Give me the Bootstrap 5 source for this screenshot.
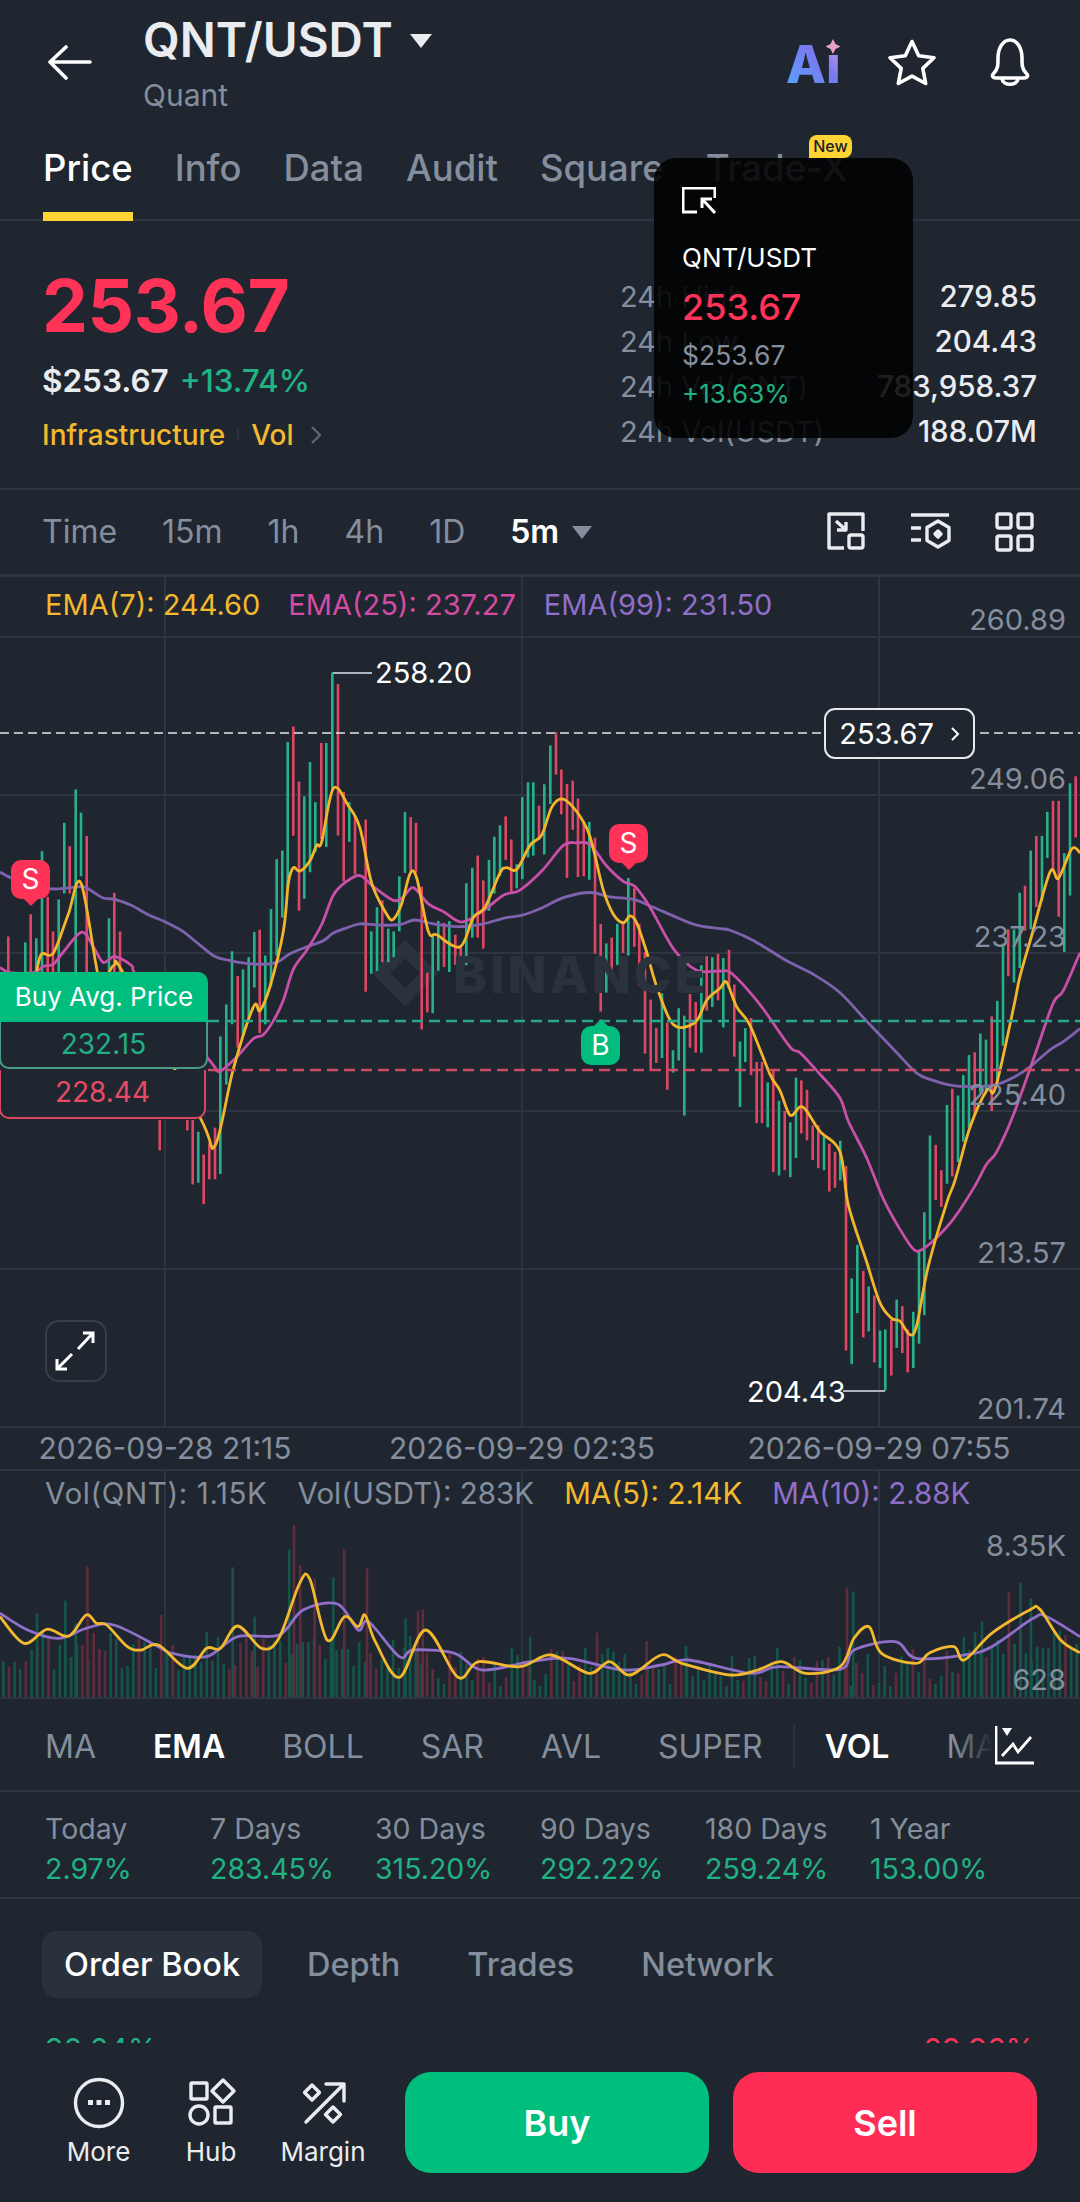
<!DOCTYPE html>
<html lang="en">
<head>
  <meta charset="UTF-8" />
  <meta name="viewport" content="width=device-width, initial-scale=1" />
  <title>QNT/USDT - Price</title>
  <link href="https://cdn.jsdelivr.net/npm/bootstrap@5.3.0/dist/css/bootstrap.min.css" rel="stylesheet" />
  <style>
    :root {
      --bg: #1f2630;
      --line: #2c3541;
      --grey: #848e9c;
      --up: #1fb384;
      --down: #ff3358;
      --gold: #f3b92e;
      --pink: #d44ba3;
      --violet: #8f6fc9;
    }

    html, body {
      height: 2202px;
      margin: 0;
      overflow: hidden;
      background: var(--bg);
      color: #eaecef;
      font-family: Inter, "Liberation Sans", sans-serif;
    }

    svg { display: block; }

    .top-head { height: 130px; padding-left: 48px; padding-right: 45px; }
    .pair-name { font-size: 47.5px; font-weight: 600; line-height: 54px; margin-top: 13px; }
    .pair-sub { font-size: 30px; line-height: 36px; color: var(--grey); margin-top: 10px; }

    .page-tabs { height: 91px; padding: 0 43px; gap: 42px; border-bottom: 2px solid var(--line); }
    .page-tab { font-size: 36.5px; font-weight: 500; color: var(--grey); line-height: 76px; height: 91px; }
    .page-tab.on { color: #fff; border-bottom: 9px solid #fcd535; }
    .new-tag { top: 5px; right: -10px; width: 43px; height: 23px; line-height: 23px; border-radius: 8px 8px 8px 0; background: #fcd535; color: #1e2329; font-size: 16px; text-align: center; font-weight: 500; }

    .quote-box { height: 269px; padding: 0 43px 0 42px; border-bottom: 2px solid var(--line); }
    .big-price { font-size: 73px; font-weight: 700; line-height: 84px; color: var(--down); margin-top: 43px; letter-spacing: -.5px; }
    .fiat-line { font-size: 31.5px; line-height: 40px; margin-top: 13px; font-weight: 600; color: #eaecef; word-spacing: 3px; }
    .fiat-line span { color: var(--up); font-weight: 500; }
    .tag-line { font-size: 28px; line-height: 40px; margin-top: 14px; color: var(--gold); font-weight: 500; }
    .tag-line i { display: inline-block; width: 2px; height: 12px; background: var(--line); margin: 0 12px 0 12px; }
    .stat-col { width: 417px; padding-top: 53px; }
    .stat-row { font-size: 29.5px; line-height: 45px; height: 45px; font-weight: 500; color: #eaecef; }
    .stat-row span { color: var(--grey); font-size: 29px; font-weight: 400; }

    .pip-card { left: 654px; top: 158px; width: 259px; height: 280px; border-radius: 22px; background: rgba(0, 0, 0, .87); padding: 29px 28px; }
    .pip-pair { font-size: 26px; line-height: 32px; color: #fff; margin-top: 27px; }
    .pip-price { font-size: 36px; line-height: 42px; color: var(--down); font-weight: 500; margin-top: 12px; }
    .pip-fiat { font-size: 26.5px; line-height: 32px; color: var(--grey); margin-top: 11px; }
    .pip-change { font-size: 26px; line-height: 32px; color: var(--up); margin-top: 7px; }

    .time-bar { height: 87px; padding: 0 45px 0 42px; border-bottom: 3px solid var(--line); }
    .time-opts { gap: 45px; font-size: 32px; color: var(--grey); }
    .time-opts .on { color: #fff; font-weight: 600; }
    .caret-down { width: 0; height: 0; border-left: 10px solid transparent; border-right: 10px solid transparent; border-top: 13px solid var(--grey); margin-left: -32px; }

    .chart-main { height: 849px; overflow: hidden; }
    .chart-svg { position: absolute; left: 0; top: 0; }
    .ema-legend { left: 45px; top: 10px; gap: 28px; font-size: 29px; line-height: 36px; }
    .axis-num { right: 14px; font-size: 29px; line-height: 34px; color: var(--grey); }
    .ext-num { font-size: 29px; line-height: 34px; color: #fff; }
    .last-pill { left: 824px; top: 131px; width: 151px; height: 51px; border: 2px solid #e6e8ea; border-radius: 11px; background: var(--bg); font-size: 29px; color: #fff; }
    .trade-mark { width: 39px; height: 39px; border-radius: 10px; color: #fff; font-size: 28px; line-height: 39px; text-align: center; }
    .trade-mark::after { content: ""; position: absolute; left: 13px; width: 0; height: 0; border-left: 7px solid transparent; border-right: 7px solid transparent; }
    .mark-sell { background: var(--down); }
    .mark-sell::after { top: 39px; border-top: 7px solid var(--down); }
    .mark-buy { background: #00bd7e; }
    .mark-buy::after { top: -7px; border-bottom: 7px solid #00bd7e; }
    .avg-head { left: 0; top: 395px; width: 208px; height: 50px; line-height: 50px; background: #00bd7e; color: #fff; font-size: 26px; text-align: center; border-radius: 0 10px 0 0; }
    .avg-box { left: -1px; width: 209px; height: 47px; line-height: 45px; background: var(--bg); font-size: 28px; text-align: center; border-radius: 0 0 10px 10px; }
    .avg-up { top: 445px; border: 2px solid #4a9a85; border-top: 0; color: #1fae86; }
    .avg-down { top: 493px; width: 207px; height: 49px; border: 2px solid #d9475f; border-top: 0; color: #e84a66; }
    .water-word { left: 453px; top: 368px; font-size: 51px; line-height: 60px; font-weight: 800; letter-spacing: 3px; color: #2a323e; }
    .full-btn { left: 45px; top: 743px; width: 62px; height: 62px; border: 2px solid #363f4b; border-radius: 14px; }

    .date-row { height: 45px; border-top: 2px solid var(--line); border-bottom: 2px solid var(--line); font-size: 30px; line-height: 41px; color: var(--grey); }
    .date-row span { position: absolute; transform: translateX(-50%); white-space: nowrap; }

    .chart-vol { height: 229px; overflow: hidden; }
    .vol-legend { left: 45px; top: 4px; gap: 30px; font-size: 29.5px; line-height: 36px; color: var(--grey); }
    .vol-legend span:first-child { letter-spacing: .6px; }

    .ind-row { height: 92px; padding: 3px 0 0 45px; border-bottom: 2px solid var(--line); gap: 57px; font-size: 32px; color: var(--grey); overflow: hidden; }
    .ind-row .on { color: #fff; font-weight: 600; }
    .ind-sep { width: 2px; height: 44px; background: var(--line); margin: 0 -27px; }
    .ind-end { right: 0; top: 0; width: 125px; height: 90px; background: linear-gradient(to right, rgba(31, 38, 48, 0), var(--bg) 30%); }

    .return-row { height: 107px; padding: 17px 45px 0; border-bottom: 2px solid var(--line); }
    .return-row div { font-size: 28.5px; line-height: 40px; color: var(--grey); white-space: nowrap; }
    .return-row b { display: block; font-weight: 400; color: var(--up); }

    .sub-tabs { height: 144px; padding: 32px 42px 0 42px; gap: 67px; font-size: 32.5px; color: var(--grey); font-weight: 500; }
    .sub-tab { height: 67px; line-height: 67px; }
    .sub-tab.on { background: #29313c; color: #fff; padding: 0 22px; border-radius: 14px; margin-right: -22px; }

    .book-peek { height: 7px; padding: 0 45px; overflow: hidden; font-size: 30px; line-height: 26px; margin-top: -7px; }
    .foot-bar { height: 159px; padding: 29px 43px 0 0; }
    .foot-link { width: 112px; font-size: 26px; line-height: 32px; color: #eaecef; text-align: center; }
    .foot-link:first-child { width: 113px; }
    .foot-link svg { margin: 5px auto 7px; }
    .trade-btn { width: 304px; height: 101px; border-radius: 26px; border: 0; color: #fff; font-size: 36px; font-weight: 600; }
    .btn-buy, .btn-buy:hover { background: #00bf7d; color: #fff; }
    .btn-sell, .btn-sell:hover { background: #ff2d55; color: #fff; }
  </style>
</head>
<body class="position-relative">

  <!-- Header -->
  <header class="top-head d-flex justify-content-between">
    <div class="d-flex">
      <svg width="95" height="130" viewBox="48 0 95 130" fill="none" stroke="#fff" stroke-width="3.6" stroke-linecap="round" stroke-linejoin="round">
        <path d="M90 62H51M66 47 50 62l16 16" />
      </svg>
      <div>
        <div class="d-flex align-items-start">
          <div class="pair-name">QNT/USDT</div>
          <svg class="ms-3" width="24" height="16" viewBox="0 0 24 16" style="margin-top:33px"><path d="M1 1h22L12 15z" fill="#eaecef" /></svg>
        </div>
        <div class="pair-sub">Quant</div>
      </div>
    </div>
    <svg width="250" height="130" viewBox="785 0 250 130" fill="none" stroke="#fff" stroke-width="3.6" stroke-linejoin="round" stroke-linecap="round">
      <defs>
        <linearGradient id="aiGrad" x1="0" y1="1" x2="1" y2="0">
          <stop offset="0" stop-color="#55a8ff" />
          <stop offset=".6" stop-color="#7a78f0" />
          <stop offset="1" stop-color="#e3abea" />
        </linearGradient>
      </defs>
      <text x="786" y="83" font-family="Inter, sans-serif" font-weight="800" font-size="52" fill="url(#aiGrad)" stroke="none">Aı</text>
      <path d="M833 39l2.5 5 5 2.5-5 2.5-2.5 5-2.5-5-5-2.5 5-2.5z" fill="#e8a0c8" stroke="none" />
      <path d="M912 41.500l6.700 14.200 15.300 2-11.200 10.700 2.900 15.100-13.700-7.400-13.700 7.400 2.900-15.100-11.200-10.700 15.300-2z" />
      <path d="M994 73c4-4 4-8 4-15 0-10 5-18 12-18s12 8 12 18c0 7 0 11 4 15 3 3 1 5-2 5h-28c-3 0-5-2-2-5zM1002 79c1 7 15 7 16 0" />
    </svg>
  </header>

  <!-- Page tabs -->
  <nav class="page-tabs d-flex">
    <div class="page-tab on">Price</div>
    <div class="page-tab">Info</div>
    <div class="page-tab">Data</div>
    <div class="page-tab">Audit</div>
    <div class="page-tab">Square</div>
    <div class="page-tab position-relative">Trade-X</div>
    <span class="new-tag position-absolute" style="left:809px;top:135px">New</span>
  </nav>

  <!-- Quote -->
  <section class="quote-box d-flex justify-content-between">
    <div>
      <div class="big-price">253.67</div>
      <div class="fiat-line">$253.67 <span>+13.74%</span></div>
      <div class="tag-line d-flex align-items-center">Infrastructure<i></i>Vol
        <svg class="ms-3" width="12" height="20" viewBox="0 0 12 20" fill="none" stroke="#5e6673" stroke-width="2.400"><path d="M2 2l8 8-8 8" /></svg>
      </div>
    </div>
    <div class="stat-col">
      <div class="stat-row d-flex justify-content-between"><span>24h High</span>279.85</div>
      <div class="stat-row d-flex justify-content-between"><span>24h Low</span>204.43</div>
      <div class="stat-row d-flex justify-content-between"><span>24h Vol(QNT)</span>783,958.37</div>
      <div class="stat-row d-flex justify-content-between"><span>24h Vol(USDT)</span>188.07M</div>
    </div>
  </section>

  <!-- Interval bar -->
  <section class="time-bar d-flex align-items-center justify-content-between">
    <div class="time-opts d-flex align-items-center">
      <span>Time</span><span>15m</span><span>1h</span><span>4h</span><span>1D</span><span class="on">5m</span><i class="caret-down"></i>
    </div>
    <svg width="208" height="40" viewBox="828 514 208 40" fill="none" stroke="#eaecef" stroke-width="3.400" stroke-linejoin="round">
      <path d="M845 550h-15v-34h34v17" />
      <rect x="850" y="537" width="14" height="13" rx="2" />
      <path d="M837 523l10 9M838 532h9v-8" />
      <path d="M912 517h38M912 530h10M912 542h10" />
      <path d="M939 523l11 6.500v13L939 549l-11-6.500v-13z" />
      <path d="M939 533l3 3-3 3-3-3z" fill="#eaecef" />
      <rect x="998" y="516" width="14" height="14" rx="2" /><rect x="1019" y="516" width="14" height="14" rx="2" />
      <rect x="998" y="538" width="14" height="14" rx="2" /><rect x="1019" y="538" width="14" height="14" rx="2" />
    </svg>
  </section>

  <!-- Price chart -->
  <section class="chart-main position-relative">
    <svg class="chart-svg" id="priceChart" width="1080" height="849" viewBox="0 577 1080 849"></svg>
    <div class="ema-legend position-absolute d-flex">
      <span style="color:var(--gold)">EMA(7): 244.60</span><span style="color:var(--pink)">EMA(25): 237.27</span><span style="color:var(--violet)">EMA(99): 231.50</span>
    </div>
    <div class="water-word position-absolute">BINANCE</div>
    <div class="axis-num position-absolute" style="top:26px">260.89</div>
    <div class="axis-num position-absolute" style="top:185px">249.06</div>
    <div class="axis-num position-absolute" style="top:343px">237.23</div>
    <div class="axis-num position-absolute" style="top:501px">225.40</div>
    <div class="axis-num position-absolute" style="top:659px">213.57</div>
    <div class="axis-num position-absolute" style="top:815px">201.74</div>
    <div class="ext-num position-absolute" style="left:375px;top:79px">258.20</div>
    <div class="ext-num position-absolute" style="left:747px;top:798px">204.43</div>
    <div class="last-pill position-absolute d-flex align-items-center justify-content-center gap-3">253.67
      <svg width="10" height="18" viewBox="0 0 10 18" fill="none" stroke="#fff" stroke-width="2"><path d="M2 3l6 6-6 6" /></svg>
    </div>
    <div class="trade-mark mark-sell position-absolute" style="left:11px;top:283px">S</div>
    <div class="trade-mark mark-sell position-absolute" style="left:609px;top:247px">S</div>
    <div class="trade-mark mark-buy position-absolute" style="left:581px;top:449px">B</div>
    <div class="avg-head position-absolute">Buy Avg. Price</div>
    <div class="avg-box avg-up position-absolute">232.15</div>
    <div class="avg-box avg-down position-absolute">228.44</div>
    <div class="full-btn position-absolute d-flex align-items-center justify-content-center">
      <svg width="42" height="42" viewBox="56 1330 42 42" fill="none" stroke="#fff" stroke-width="3"><path d="M79 1349l15-16M84 1333h10v10M73 1354l-15 15M58 1359v10h10" /></svg>
    </div>
  </section>

  <!-- Dates -->
  <div class="date-row position-relative">
    <span style="left:165px">2026-09-28 21:15</span>
    <span style="left:522px">2026-09-29 02:35</span>
    <span style="left:879px">2026-09-29 07:55</span>
  </div>

  <!-- Volume chart -->
  <section class="chart-vol position-relative">
    <svg class="chart-svg" id="volChart" width="1080" height="229" viewBox="0 1471 1080 229"></svg>
    <div class="vol-legend position-absolute d-flex">
      <span>Vol(QNT): 1.15K</span><span>Vol(USDT): 283K</span><span style="color:var(--gold)">MA(5): 2.14K</span><span style="color:var(--violet)">MA(10): 2.88K</span>
    </div>
    <div class="axis-num position-absolute" style="top:58px">8.35K</div>
    <div class="axis-num position-absolute" style="top:192px">628</div>
  </section>

  <!-- Indicators -->
  <section class="ind-row d-flex align-items-center position-relative">
    <span>MA</span><span class="on">EMA</span><span>BOLL</span><span>SAR</span><span>AVL</span><span>SUPER</span><i class="ind-sep"></i><span class="on">VOL</span><span>MACD</span>
    <div class="ind-end position-absolute d-flex justify-content-end align-items-center pe-5">
      <svg width="40" height="40" viewBox="995 1726 40 40" fill="none" stroke="#fff" stroke-width="2.800" style="margin-right:-3px"><path d="M996 1727v37h38M1002 1757l11-12 5 8 13-15" /><path d="M1002 1729h10l-5 8z" fill="#fff" stroke="none" /></svg>
    </div>
  </section>

  <!-- Returns -->
  <section class="return-row row g-0 mx-0">
    <div class="col-2">Today<b>2.97%</b></div>
    <div class="col-2">7 Days<b>283.45%</b></div>
    <div class="col-2">30 Days<b>315.20%</b></div>
    <div class="col-2">90 Days<b>292.22%</b></div>
    <div class="col-2">180 Days<b>259.24%</b></div>
    <div class="col-2">1 Year<b>153.00%</b></div>
  </section>

  <!-- Sub tabs -->
  <section class="sub-tabs d-flex">
    <div class="sub-tab on">Order Book</div>
    <div class="sub-tab">Depth</div>
    <div class="sub-tab">Trades</div>
    <div class="sub-tab">Network</div>
  </section>
  <div class="book-peek d-flex justify-content-between"><span style="color:var(--up)">90.04%</span><span style="color:var(--down)">09.96%</span></div>

  <!-- Footer -->
  <footer class="foot-bar d-flex justify-content-between">
    <div class="d-flex" style="margin-left:42px">
      <div class="foot-link">
        <svg width="52" height="52" viewBox="72 2077 52 52" fill="none" stroke="#eaecef" stroke-width="3.400"><circle cx="98" cy="2103" r="23.500" /><path d="M87 2100h5v5h-5zM95.500 2100h5v5h-5zM104 2100h5v5h-5z" fill="#eaecef" stroke="none" /></svg>
        More
      </div>
      <div class="foot-link">
        <svg width="52" height="52" viewBox="185 2077 52 52" fill="none" stroke="#eaecef" stroke-width="3.400" stroke-linejoin="round"><rect x="191" y="2083" width="16" height="16" rx="1" /><path d="M223 2080l11 11-11 11-11-11z" /><circle cx="199" cy="2115" r="9" /><rect x="215" y="2107" width="16" height="16" rx="1" /></svg>
        Hub
      </div>
      <div class="foot-link">
        <svg width="52" height="52" viewBox="297 2077 52 52" fill="none" stroke="#eaecef" stroke-width="3.400" stroke-linejoin="round" stroke-linecap="round"><path d="M306 2122l38-38M326 2084h18v17" /><path d="M312 2085l7.500 7.500-7.500 7.500-7.500-7.500zM333 2107l7.500 7.500-7.500 7.500-7.500-7.500z" /></svg>
        Margin
      </div>
    </div>
    <div class="d-flex gap-4">
      <button class="btn trade-btn btn-buy" type="button">Buy</button>
      <button class="btn trade-btn btn-sell" type="button">Sell</button>
    </div>
  </footer>

  <!-- Floating window -->
  <div class="pip-card position-absolute">
    <svg width="34" height="28" viewBox="685 187 34 28" fill="none" stroke="#fff" stroke-width="3"><path d="M700 212h-14v-24h32v10M718 213l-12-13M705 208v-9h10" /></svg>
    <div class="pip-pair">QNT/USDT</div>
    <div class="pip-price">253.67</div>
    <div class="pip-fiat">$253.67</div>
    <div class="pip-change">+13.63%</div>
  </div>

  <script src="https://cdn.jsdelivr.net/npm/bootstrap@5.3.0/dist/js/bootstrap.bundle.min.js"></script>

  <!-- Chart data -->
  <script>
    const UP = "#27b189", DOWN = "#dd4763", GRID = "#2c3541";

    // each third of the chart keeps its own origin and vertical scale: [x0, y0, yScale]
    const origins = [[0, 680, 2.904], [360, 680, 2.904], [720, 760, 2.45]];

    // candles: [x, top, bottom, isRed]
    const candles = [
      [[25,745,900,1],[76,762,900,0],[92,680,900,1],[109,750,900,0],[126,497,900,0],[143,630,900,1],[159,730,900,1],[176,637,900,0],[193,415,620,0],[209,483,620,1],[227,318,900,0],[243,385,570,0],[260,453,900,1],[327,692,900,0],[343,618,900,1],[360,730,900,1],[479,1278,1366,1],[562,1278,1308,1],[578,1278,1465,1],[595,1312,1460,0],[611,1378,1522,1],[628,1345,1450,1],[645,1300,1450,1],[661,1035,1435,0],[679,942,1175,0],[696,788,1000,0],[713,860,1068,1],[729,840,1030,0],[746,805,990,0],[763,732,893,0],[779,725,1025,1],[796,800,1000,0],[813,665,890,0],[830,520,800,0],[847,495,690,0],[863,180,610,0],[880,135,452,1],[897,295,670,1],[913,338,635,0],[930,238,558,0],[946,355,500,0],[964,183,462,1],[979,183,485,0],[997,-22,318,0],[1014,12,452,1],[1031,325,585,1],[1048,355,470,0],[1065,395,565,1]],
      [[17,405,905,1],[34,730,853,0],[51,660,845,0],[67,640,820,1],[85,722,820,0],[101,730,805,0],[118,570,730,0],[135,383,560,0],[152,398,560,1],[168,415,560,1],[185,600,1015,1],[202,850,965,1],[218,740,968,0],[235,700,845,0],[252,705,833,1],[268,700,848,0],[286,740,827,1],[302,770,890,1],[319,590,828,0],[337,545,748,0],[353,510,748,1],[370,582,780,1],[387,522,670,0],[403,455,620,0],[420,422,570,0],[437,396,522,1],[454,463,615,1],[470,535,605,0],[487,340,578,0],[504,297,515,0],[520,297,510,0],[537,365,465,1],[553,303,507,0],[571,190,360,0],[588,152,275,1],[604,260,390,1],[621,302,575,1],[638,292,435,1],[654,344,572,1],[671,410,570,1],[688,412,580,0],[705,458,795,1],[722,708,963,1],[739,765,908,0],[755,748,862,1],[772,708,828,0],[789,700,793,1],[805,575,800,0],[823,605,775,1],[838,708,888,1],[855,790,1085,1],[872,928,1135,1],[889,1010,1112,1],[906,910,1098,0],[922,995,1190,1],[939,1075,1140,0],[956,953,1105,0],[973,975,1265,0],[990,912,1068,1],[1007,935,1082,1],[1024,828,1082,0],[1040,802,960,1],[1057,805,950,0],[1074,795,930,1]],
      [[10,485,655,0],[27,465,560,1],[43,550,727,1],[60,690,850,0],[76,657,740,0],[93,632,772,1],[110,740,890,1],[126,740,890,1],[143,790,900,0],[160,760,1010,1],[177,835,1018,0],[194,860,1005,1],[211,888,1022,0],[228,778,975,0],[244,785,915,1],[261,808,932,1],[278,895,980,1],[295,895,1000,1],[312,920,1005,0],[328,940,1057,1],[345,960,1048,1],[361,933,1030,0],[378,995,1447,1],[395,1270,1480,0],[412,1188,1355,0],[430,1252,1415,1],[446,1290,1400,0],[463,1312,1476,1],[480,1398,1490,0],[496,1395,1545,0],[514,1372,1508,1],[530,1322,1440,0],[547,1338,1453,1],[563,1395,1500,1],[580,1352,1490,0],[597,1200,1430,0],[613,1108,1360,0],[630,920,1175,0],[647,943,1078,1],[664,1005,1095,1],[681,845,1038,0],[697,805,1020,1],[714,822,985,0],[730,772,935,0],[747,723,900,0],[764,716,870,1],[781,670,815,0],[798,685,810,0],[815,628,860,1],[832,590,790,0],[849,450,700,0],[865,415,530,1],[882,415,545,0],[899,325,510,0],[915,308,418,1],[932,222,415,0],[949,186,360,1],[966,186,345,0],[982,127,240,0],[999,100,270,1],[1016,100,384,1],[1033,228,470,0],[1050,57,332,0],[1067,40,190,1]]
    ];

    const ema99 = [
      [[0,558],[40,578],[90,595],[130,603],[170,607],[245,600],[270,610],[310,633],[345,637],[395,655],[445,682],[490,700],[545,728],[600,770],[645,803],[690,815],[740,823],[800,825],[835,818],[870,795],[920,775],[970,757],[1000,735],[1040,720],[1080,708]],
      [[60,712],[120,710],[165,697],[220,708],[300,716],[370,708],[430,692],[490,682],[550,660],[610,632],[690,617],[750,630],[820,637],[880,660],[940,685],[1010,712],[1080,722]],
      [[30,417],[100,442],[200,492],[280,525],[360,570],[440,640],[520,708],[590,767],[640,785],[700,798],[770,800],[830,795],[880,778],[930,752],[990,710],[1030,690],[1080,658]]
    ];
    const ema25 = [
      [[0,835],[30,850],[100,850],[130,832],[160,825],[190,790],[245,732],[280,775],[310,820],[345,803],[395,830],[420,870],[625,1100],[650,1135],[670,1130],[710,1095],[760,1042],[790,1030],[820,990],[850,930],[880,840],[920,785],[965,710],[1000,625],[1040,585],[1080,568]],
      [[40,600],[100,640],[130,630],[160,603],[205,650],[250,672],[305,703],[370,670],[430,625],[480,610],[545,555],[610,480],[650,473],[690,478],[740,540],[790,585],[825,600],[870,660],[940,780],[1010,843],[1080,845]],
      [[30,520],[80,560],[130,610],[210,703],[240,717],[300,770],[360,828],[385,885],[440,975],[490,1075],[540,1150],[580,1198],[605,1200],[650,1170],[700,1125],[760,1050],[800,990],[830,960],[880,870],[950,710],[1000,595],[1030,565],[1080,472]]
    ];
    const ema7 = [
      [[110,845],[125,795],[160,793],[205,680],[243,590],[295,860],[320,860],[343,828],[375,860],[600,1270],[645,1352],[700,1130],[760,950],[780,960],[810,890],[850,730],[865,590],[880,545],[900,555],[930,525],[950,480],[965,470],[1000,315],[1045,365],[1080,430]],
      [[35,590],[80,680],[100,695],[125,650],[150,563],[170,575],[205,730],[230,740],[300,775],[340,690],[375,660],[420,560],[440,545],[470,550],[510,480],[545,450],[575,370],[605,345],[640,370],[680,430],[700,490],[730,610],[760,680],[790,705],[810,685],[830,705],[860,790],[890,890],[940,1000],[1005,995],[1040,930],[1080,895]],
      [[20,545],[50,605],[90,650],[150,770],[180,810],[210,870],[240,850],[260,860],[300,910],[360,960],[385,1090],[440,1230],[480,1330],[515,1368],[540,1375],[570,1408],[590,1385],[625,1240],[680,1085],[705,1030],[750,900],[800,810],[820,815],[840,760],[885,590],[900,530],[935,430],[990,275],[1015,290],[1050,225],[1065,215],[1080,228]]
    ];

    function toPage(parts) {
      return parts.flatMap((part, i) => {
        const [ox, oy, sy] = origins[i];
        return part.map(([x, y]) => [ox + x / 3, oy + y / sy]);
      });
    }

    // catmull-rom through the points, so the averages read as curves
    function smooth(pts) {
      let d = `M${pts[0][0].toFixed(1)} ${pts[0][1].toFixed(1)}`;
      for (let i = 0; i < pts.length - 1; i++) {
        const a = pts[i - 1] || pts[i], b = pts[i], c = pts[i + 1], e = pts[i + 2] || c;
        const c1x = b[0] + (c[0] - a[0]) / 6, c1y = b[1] + (c[1] - a[1]) / 6;
        const c2x = c[0] - (e[0] - b[0]) / 6, c2y = c[1] - (e[1] - b[1]) / 6;
        d += `C${c1x.toFixed(1)} ${c1y.toFixed(1)} ${c2x.toFixed(1)} ${c2y.toFixed(1)} ${c[0].toFixed(1)} ${c[1].toFixed(1)}`;
      }
      return d;
    }

    let svg = "";
    [637, 795, 953, 1111, 1269].forEach(y => svg += `<line x1="0" x2="1080" y1="${y}" y2="${y}" stroke="${GRID}" stroke-width="2"/>`);
    [165, 522, 879].forEach(x => svg += `<line x1="${x}" x2="${x}" y1="577" y2="1426" stroke="${GRID}" stroke-width="2"/>`);
    // watermark diamond
    svg += `<path d="M405 940l33 33-33 33-33-33z M405 958l-15 15 15 15 15-15z" fill="#2a323e" fill-rule="evenodd"/>`;
    candles.forEach((part, i) => {
      const [ox, oy, sy] = origins[i];
      part.forEach(([x, t, b, red]) => {
        svg += `<rect x="${(ox + x / 3 - 1.3).toFixed(1)}" y="${(oy + t / sy).toFixed(1)}" width="2.600" height="${((b - t) / sy).toFixed(1)}" fill="${red ? DOWN : UP}"/>`;
      });
    });
    svg += `<path d="${smooth(toPage(ema99))}" fill="none" stroke="#7f62ad" stroke-width="2.800"/>`;
    svg += `<path d="${smooth(toPage(ema25))}" fill="none" stroke="#c94fa8" stroke-width="2.800"/>`;
    svg += `<path d="${smooth(toPage(ema7))}" fill="none" stroke="#f3b52c" stroke-width="2.800"/>`;
    svg += `<line x1="0" x2="1080" y1="733" y2="733" stroke="#e4e6e9" stroke-width="1.600" stroke-dasharray="9 5"/>`;
    svg += `<line x1="208" x2="1080" y1="1021" y2="1021" stroke="#2aa78c" stroke-width="2.600" stroke-dasharray="11 6"/>`;
    svg += `<line x1="208" x2="1080" y1="1070" y2="1070" stroke="#cf4a63" stroke-width="2.600" stroke-dasharray="11 6"/>`;
    // high and low callouts
    svg += `<path d="M333 673h39M885 1391h-42" fill="none" stroke="#aeb4bc" stroke-width="1.800"/>`;
    document.getElementById("priceChart").innerHTML = svg;

    // volume pane, x/y read from a 1568 wide crop
    const maFive = [[0,440],[35,520],[68,478],[100,498],[125,435],[140,460],[155,465],[185,530],[205,540],[230,525],[272,595],[300,535],[320,535],[345,468],[380,535],[405,505],[435,340],[450,328],[475,510],[500,440],[520,470],[530,435],[545,515],[580,622],[618,480],[665,622],[695,575],[755,590],[800,555],[855,610],[885,575],[915,615],[960,555],[990,580],[1060,615],[1100,600],[1135,575],[1170,610],[1220,590],[1240,505],[1262,470],[1280,550],[1330,580],[1350,548],[1385,530],[1400,570],[1440,490],[1495,420],[1510,418],[1540,510],[1568,548]];
    const maTen = [[0,430],[40,480],[85,505],[125,475],[165,465],[230,530],[250,550],[300,560],[345,500],[405,495],[440,420],[490,402],[520,480],[535,455],[580,560],[600,540],[660,550],[700,600],[770,575],[825,565],[905,600],[960,585],[1000,570],[1090,610],[1130,590],[1220,598],[1240,540],[1300,515],[1330,565],[1400,555],[1440,530],[1500,445],[1520,440],[1568,500]];
    const spikes = [[125,290,1],[232,435,1],[336,292,0],[368,440,0],[418,238,0],[425,165,1],[434,285,1],[455,325,1],[482,322,0],[498,238,1],[531,295,1],[605,422,1],[612,418,1],[587,445,0],[768,500,0],[865,488,1],[937,513,1],[994,528,0],[1228,352,1],[1237,365,0],[1480,337,0],[1463,365,1],[1424,455,0],[1495,385,0],[93,392,0],[52,430,0],[108,460,0]];
    const volY = y => 1470 + y / 3;
    const volX = x => x / 1.452;
    const VOL_UP = "#155549", VOL_DOWN = "#5f2c3c";

    let vol = "";
    [165, 522, 879].forEach(x => vol += `<line x1="${x}" x2="${x}" y1="1471" y2="1698" stroke="${GRID}" stroke-width="2"/>`);
    let seed = 7;
    for (let x = 2; x < 1080; x += 5.65) {
      seed = (seed * 137 + 59) % 1009;
      const red = seed % 3 !== 0 ? seed % 2 : 0;
      const h = 12 + (seed % 40) + (x < 420 ? 16 : 0) + (x > 960 ? 18 : 0);
      vol += `<rect x="${x.toFixed(1)}" y="${1698 - h}" width="2.600" height="${h}" fill="${red ? VOL_DOWN : VOL_UP}"/>`;
    }
    spikes.forEach(([x, y, red]) => {
      vol += `<rect x="${volX(x).toFixed(1)}" y="${volY(y)}" width="2.600" height="${1698 - volY(y)}" fill="${red ? VOL_DOWN : VOL_UP}"/>`;
    });
    vol += `<line x1="0" x2="1080" y1="1698" y2="1698" stroke="${GRID}" stroke-width="2"/>`;
    const volLine = pts => smooth(pts.map(([x, y]) => [volX(x), volY(y)]));
    vol += `<path d="${volLine(maTen)}" fill="none" stroke="#8f6fc9" stroke-width="2.800"/>`;
    vol += `<path d="${volLine(maFive)}" fill="none" stroke="#f3b92e" stroke-width="2.800"/>`;
    document.getElementById("volChart").innerHTML = vol;
  </script>

</body>
</html>
